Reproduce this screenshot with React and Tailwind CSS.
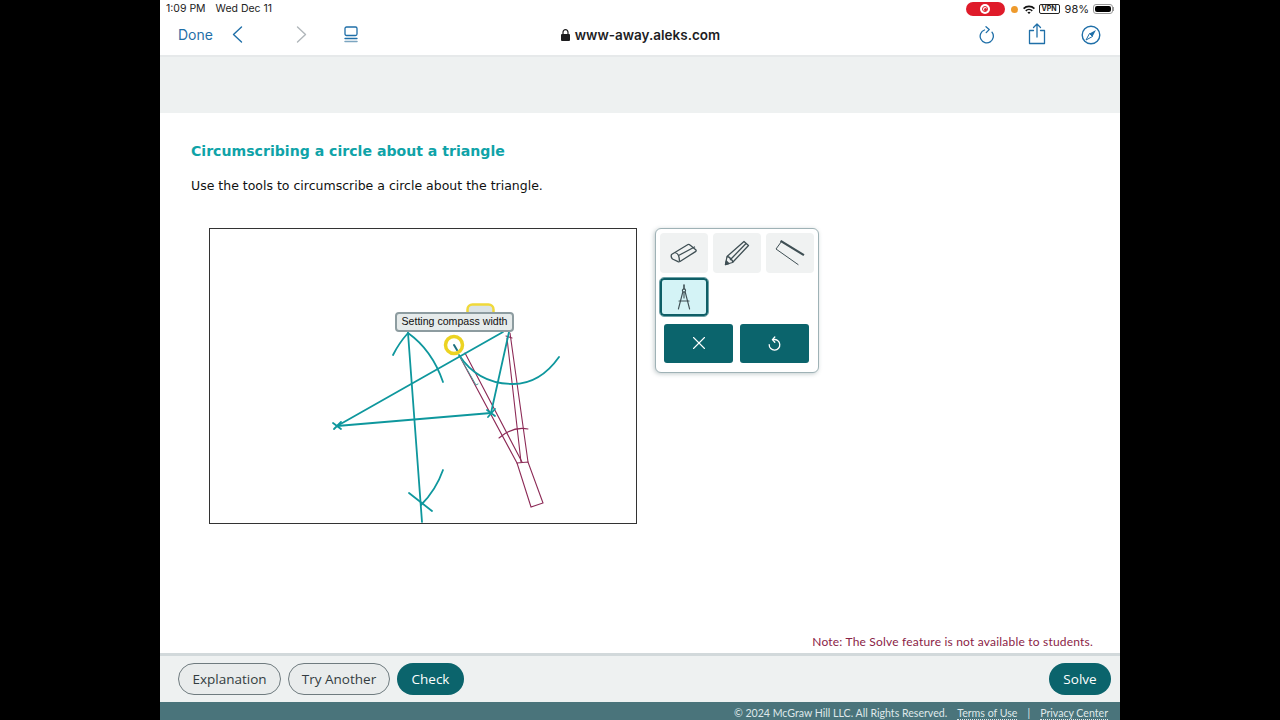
import React from "react";
import { X } from "lucide-react";

const Blue = "#1f6fa8";

function Canvas() {
  const teal = "#0e979d";
  const red = "#8c2a56";
  return (
    <svg viewBox="0 0 426 294" className="w-full h-full block" fill="none">
      <g transform="translate(-210,-229)" strokeLinecap="round">
        <rect x="467.5" y="304.5" width="26" height="24" rx="5" fill="#dbe3e6" stroke="#f0d93a" strokeWidth="2.5" />
        <g stroke={red} strokeWidth="1.1">
          <path d="M460 357 L517 463" />
          <path d="M465 353 L522 462" />
          <path d="M507 338 L521 462" />
          <path d="M510 333 L528 462" />
          <path d="M517 463 L528 462 L543 503 L531 507 Z" />
          <path d="M499 438 Q513 426 528 429" />
          <path d="M506 336 L512 338" />
        </g>
        <g stroke={teal} strokeWidth="1.8">
          <path d="M337 426 L491 413" />
          <path d="M337 426 L503 332" />
          <path d="M408 333 L422 522" />
          <path d="M509 332 L491 413" />
          <path d="M393 355 Q399 343 408 333" />
          <path d="M408 333 Q432 350 443 382" />
          <path d="M459 355 Q478 384 513 384 Q540 384 559 357" />
          <path d="M443 470 Q436 490 421 505" />
          <path d="M409 493 L432 511" />
          <path d="M333 423 L341 429 M341 422 L334 429" />
          <path d="M487 410 L495 416 M495 409 L488 417" />
        </g>
        <path d="M460 357 L476 385 L478 384" stroke="#4d9a98" strokeWidth="1" />
        <circle cx="454" cy="345" r="8.5" stroke="#ecd322" strokeWidth="3.5" />
        <path d="M454 345 L457 350" stroke="#1c6f80" strokeWidth="2" />
      </g>
    </svg>
  );
}

function Eraser() {
  return (
    <svg width="28" height="20" viewBox="0 0 28 20" fill="none" stroke="#3f4f54" strokeWidth="1.3" strokeLinejoin="round">
      <path d="M1.5 11.5 L18 1.5 Q19 1 20 2 L26 7 Q26.5 8 25.5 8.6 L10 18.5 Q9 19 8 18.6 L2.5 16 Q0.5 14 1.5 11.5 Z" />
      <path d="M5 9.5 Q8 10.5 8.5 12.5 Q9.5 15 9.5 18.5" />
      <path d="M8.5 12.5 L25 3.8" />
    </svg>
  );
}
function Pencil() {
  return (
    <svg width="26" height="26" viewBox="0 0 26 26" fill="none" stroke="#3f4f54" strokeWidth="1.3" strokeLinejoin="round">
      <path d="M1.5 24.5 L3 16.5 L20 1.5 L24.5 5.5 L8.5 22.5 Z" />
      <path d="M3 16.5 Q6.5 17 6.5 19.5 Q9 20 8.5 22.5" />
      <path d="M6.5 19.5 L22 3.5" />
      <path d="M1.5 24.5 L2.3 21 L5 23.6 Z" fill="#3f4f54" />
    </svg>
  );
}
function Straightedge() {
  return (
    <svg width="30" height="26" viewBox="0 0 30 26" fill="none" stroke="#3f4f54" strokeLinecap="square">
      <path d="M6.5 1.5 L28 14.5" strokeWidth="2.2" />
      <path d="M6.5 1.5 L1 9 L23 24.5" strokeWidth="1" />
    </svg>
  );
}
function Compass() {
  return (
    <svg width="16" height="26" viewBox="0 0 16 26" fill="none" stroke="#3f4f54" strokeWidth="1.1" strokeLinecap="round" strokeLinejoin="round">
      <path d="M8 1 V5" strokeWidth="1.6" />
      <circle cx="8" cy="6.5" r="1.6" />
      <path d="M6.8 8 L2.4 25 M9.2 8 L13.6 25" />
      <path d="M3 17 H13" />
      <path d="M8 8.5 V14" />
    </svg>
  );
}
function Undo() {
  return (
    <svg width="13" height="15" viewBox="0 0 13 15" fill="none" stroke="#fff" strokeWidth="1.3" strokeLinecap="round" strokeLinejoin="round">
      <path d="M5.5 3.6 A5.3 5.3 0 1 1 1.2 8.6" />
      <path d="M6.8 1 L4.4 3.6 L6.8 6.2" />
    </svg>
  );
}

function Reload() {
  return (
    <svg width="16" height="18" viewBox="0 0 16 18" fill="none" stroke={Blue} strokeWidth="1.3" strokeLinecap="round" strokeLinejoin="round">
      <path d="M5.5 4 A6.6 6.6 0 1 0 13 6.2" />
      <path d="M7 0.8 L10.2 3.6 L7.2 6.6" />
    </svg>
  );
}
function Share() {
  return (
    <svg width="18" height="22" viewBox="0 0 18 22" fill="none" stroke={Blue} strokeWidth="1.3" strokeLinecap="round" strokeLinejoin="round">
      <path d="M5.5 7.5 H1.5 V20.5 H16.5 V7.5 H12.5" />
      <path d="M9 14 V1 M5.5 4.5 L9 1 L12.5 4.5" />
    </svg>
  );
}
function Compass2() {
  return (
    <svg width="20" height="20" viewBox="0 0 20 20" fill="none">
      <circle cx="10" cy="10" r="8.8" stroke={Blue} strokeWidth="1.4" />
      <path d="M15 5 L11.5 11.5 L8.5 8.5 Z" fill={Blue} />
      <path d="M5 15 L8.5 8.5 L11.5 11.5 Z" stroke={Blue} strokeWidth="1" />
    </svg>
  );
}
function Tabs() {
  return (
    <svg width="14" height="17" viewBox="0 0 14 17" fill="none" stroke={Blue} strokeLinecap="round">
      <rect x="1" y="1" width="12" height="8.5" rx="1.5" strokeWidth="1.3" />
      <path d="M1 12.5 H13" strokeWidth="1.3" />
      <path d="M1 15.5 H13" strokeWidth="1.5" stroke="#7ba5c0" />
    </svg>
  );
}
function Wifi() {
  return (
    <svg width="12" height="9" viewBox="0 0 12 9" fill="#111">
      <path d="M0 3 A8.5 8.5 0 0 1 12 3 L10.8 4.2 A7 7 0 0 0 1.2 4.2 Z" />
      <path d="M2.2 5.2 A5.4 5.4 0 0 1 9.8 5.2 L8.6 6.4 A3.6 3.6 0 0 0 3.4 6.4 Z" />
      <path d="M4.4 7.4 A2.3 2.3 0 0 1 7.6 7.4 L6 9 Z" />
    </svg>
  );
}

export default function App() {
  return (
    <div className="w-[1280px] h-[720px] bg-black flex justify-center overflow-hidden font-['Lato','Liberation_Sans',sans-serif]">
      <div className="w-[960px] h-[720px] bg-white flex flex-col">
        <div className="h-[17px] flex items-center justify-between pl-[6px] pr-[6px] font-['Inter',sans-serif] text-[10.5px] text-[#222]">
          <div className="flex gap-[10px] pt-[1px]">
            <span>1:09 PM</span>
            <span>Wed Dec 11</span>
          </div>
          <div className="flex items-center pt-[1px]">
            <div className="w-[39px] h-[14px] rounded-[7px] bg-[#df1b2a] flex items-center justify-center">
              <div className="w-[10px] h-[10px] rounded-full bg-white flex items-center justify-center">
                <div className="w-[6px] h-[6px] rounded-full border border-[#df1b2a] flex items-center justify-center">
                  <div className="w-[3px] h-[3px] rounded-full bg-[#df1b2a]" />
                </div>
              </div>
            </div>
            <div className="w-[7px] h-[7px] rounded-full bg-[#ee9a2c] ml-[6px]" />
            <div className="ml-[5px]"><Wifi /></div>
            <div className="ml-[4px] w-[21px] h-[10px] rounded-[2px] border border-[#222] text-[7px] leading-[8px] font-bold text-center">VPN</div>
            <span className="ml-[5px] text-[11px]">98%</span>
            <div className="ml-[4px] w-[20px] h-[10px] rounded-[3px] border border-[#999] p-[1px] flex">
              <div className="flex-1 bg-black rounded-[2px]" />
            </div>
            <div className="w-[1px] h-[4px] bg-[#999]" />
          </div>
        </div>

        <div className="h-[40px] border-b-2 border-[#e6e9ea] flex items-center pb-[3px]">
          <span className="ml-[18px] text-[14px] text-[#1f6fa8] font-['Inter',sans-serif]">Done</span>
          <svg className="ml-[19px]" width="11" height="17" viewBox="0 0 11 17" fill="none" stroke="#1f6fa8" strokeWidth="1.4" strokeLinecap="round" strokeLinejoin="round"><path d="M9.5 1 L1.5 8.5 L9.5 16" /></svg>
          <svg className="ml-[53px]" width="11" height="17" viewBox="0 0 11 17" fill="none" stroke="#b0b6ba" strokeWidth="1.4" strokeLinecap="round" strokeLinejoin="round"><path d="M1.5 1 L9.5 8.5 L1.5 16" /></svg>
          <div className="ml-[37px]"><Tabs /></div>
          <div className="flex-1 flex items-center justify-center gap-[5px] pt-[1px] pr-[56px] text-[13.5px] font-semibold text-[#1d1d1f] font-['Inter',sans-serif]">
            <svg width="9" height="12" viewBox="0 0 9 12" fill="#1d1d1f"><path d="M1 5 H8 Q9 5 9 6 V11 Q9 12 8 12 H1 Q0 12 0 11 V6 Q0 5 1 5 Z" /><path d="M2 5 V3.2 A2.5 2.5 0 0 1 7 3.2 V5" fill="none" stroke="#1d1d1f" strokeWidth="1.2" /></svg>
            <span>www-away.aleks.com</span>
          </div>
          <div className="flex items-center">
            <Reload />
            <div className="ml-[33px] mb-[1px]"><Share /></div>
            <div className="ml-[35px] mr-[19px]"><Compass2 /></div>
          </div>
        </div>

        <div className="h-[56px] bg-[#eef1f1]" />

        <div className="flex-1 relative pl-[31px] pt-[28px] min-h-0">
          <h1 className="font-['DejaVu_Sans',sans-serif] text-[14.1px] leading-[20px] font-bold text-[#0fa3a8]">Circumscribing a circle about a triangle</h1>
          <p className="font-['DejaVu_Sans',sans-serif] mt-[15px] text-[12.5px] leading-[20px] text-[#111]">Use the tools to circumscribe a circle about the triangle.</p>
          <div className="mt-[32px] ml-[18px] flex items-start gap-[18px]">
            <div className="w-[428px] h-[296px] border border-[#333] relative">
              <Canvas />
              <div className="absolute left-[185px] top-[83px] w-[119px] h-[20px] rounded-[4px] bg-[#e6ebeb] border-2 border-[#8d9ca0] flex items-center justify-center font-['Liberation_Sans',sans-serif] text-[10.6px] text-[#111]">
                Setting compass width
              </div>
            </div>
            <div className="w-[164px] h-[145px] rounded-[6px] border border-[#9fb2b6] bg-white shadow-[-1px_1px_4px_rgba(120,140,145,0.45)] px-[4px] pt-[4px]">
              <div className="grid grid-cols-[48px_48px_48px] gap-x-[5px] gap-y-[5px]">
                <div className="h-[40px] rounded-[4px] bg-[#f0f2f2] flex items-center justify-center"><Eraser /></div>
                <div className="h-[40px] rounded-[4px] bg-[#f0f2f2] flex items-center justify-center"><Pencil /></div>
                <div className="h-[40px] rounded-[4px] bg-[#f0f2f2] flex items-center justify-center"><Straightedge /></div>
                <div className="h-[38px] rounded-[4px] bg-[#d4f3f6] border-2 border-[#0e5e66] outline outline-1 outline-[#6fa3a8] flex items-center justify-center"><Compass /></div>
              </div>
              <div className="mt-[8px] ml-[4px] flex gap-[7px]">
                <div className="w-[69px] h-[39px] rounded-[3px] bg-[#0b646c] flex items-center justify-center pb-[2px]"><X size={22} color="#fff" strokeWidth={1.2} /></div>
                <div className="w-[69px] h-[39px] rounded-[3px] bg-[#0b646c] flex items-center justify-center pb-[1px]"><Undo /></div>
              </div>
            </div>
          </div>
          <div className="absolute right-[27px] bottom-[3px] text-[12px] leading-[16px] tracking-[0.2px] text-[#8a2346]">Note: The Solve feature is not available to students.</div>
        </div>

        <div className="h-[49px] bg-[#eef1f1] border-t-[3px] border-[#d2d9db] flex items-center pl-[18px] pr-[9px] font-['Open_Sans',sans-serif] text-[13.5px] font-medium">
          <div className="w-[103px] h-[32px] rounded-full border border-[#6f7b7f] bg-[#e9ecec] flex items-center justify-center text-[#333c40]">Explanation</div>
          <div className="ml-[7px] w-[102px] h-[32px] rounded-full border border-[#6f7b7f] bg-[#e9ecec] flex items-center justify-center text-[#333c40]">Try Another</div>
          <div className="ml-[7px] w-[67px] h-[32px] rounded-full bg-[#0b646c] flex items-center justify-center text-white">Check</div>
          <div className="ml-auto w-[62px] h-[32px] rounded-full bg-[#0b646c] flex items-center justify-center text-white">Solve</div>
        </div>

        <div className="h-[18px] bg-[#4a747b] flex items-center justify-end pt-[5px] pr-[12px] text-[10.6px] text-[#dfe8ea]">
          <span>© 2024 McGraw Hill LLC. All Rights Reserved.</span>
          <span className="ml-[10px] border-b border-dotted border-[#dfe8ea] leading-[12px]">Terms of Use</span>
          <span className="mx-[10px]">|</span>
          <span className="border-b border-dotted border-[#dfe8ea] leading-[12px]">Privacy Center</span>
        </div>
      </div>
    </div>
  );
}
